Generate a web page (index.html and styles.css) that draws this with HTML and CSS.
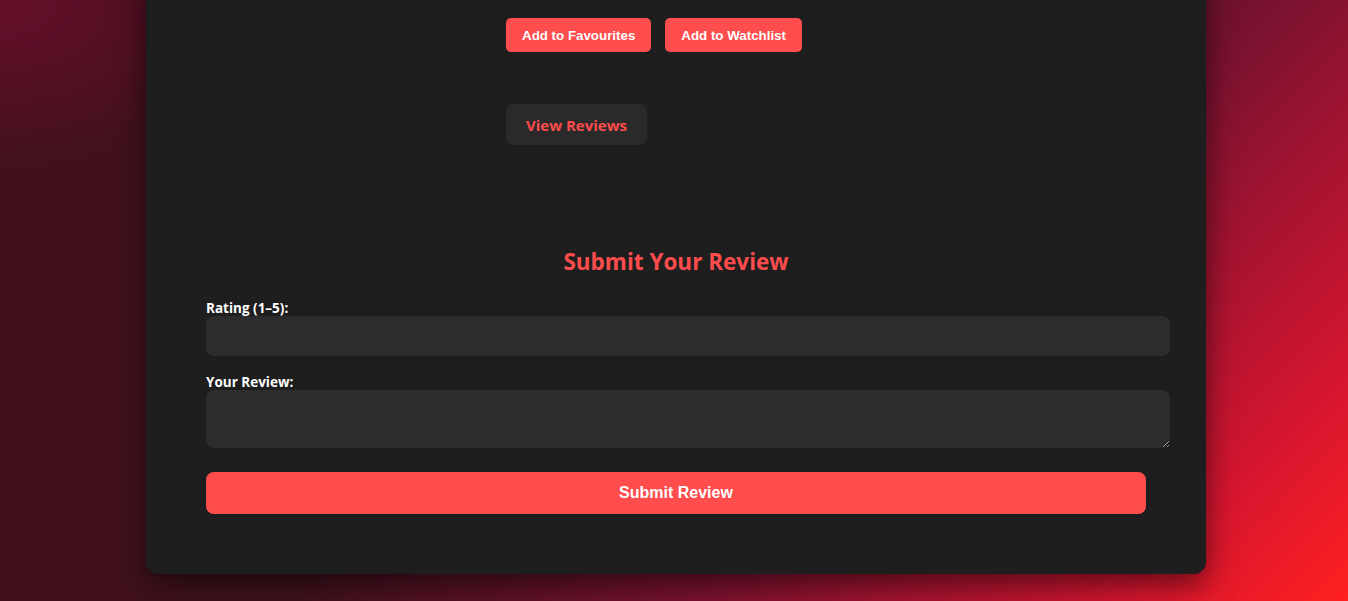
FILE: index.html
```html
<!DOCTYPE html>
<html lang="en">
<head>
<meta charset="utf-8">
<title>Movie Details</title>
<link rel="stylesheet" href="styles.css">
</head>
<body>
<div class="page">
  <main class="card">
    <section class="details">
      <div class="poster-space"></div>
      <div class="info">
        <div class="actions">
          <button class="btn-small">Add to Favourites</button>
          <button class="btn-small">Add to Watchlist</button>
        </div>
        <button class="btn-reviews">View Reviews</button>
      </div>
    </section>
    <section class="review-form">
      <h2 class="form-title">Submit Your Review</h2>
      <form class="form">
        <label class="label" for="rating">Rating (1–5):</label>
        <input class="field" id="rating" type="number" min="1" max="5">
        <label class="label label-gap" for="review">Your Review:</label>
        <textarea class="field area" id="review"></textarea>
        <button type="button" class="btn-submit">Submit Review</button>
      </form>
    </section>
  </main>
</div>
</body>
</html>
```

FILE: styles.css
```css
html, body {
  margin: 0;
  padding: 0;
}
body {
  height: 601px;
  overflow: hidden;
  background:
    radial-gradient(ellipse 260px 170px at 0 0, rgba(110, 14, 44, 0.85), rgba(110, 14, 44, 0) 100%),
    linear-gradient(135deg, #40111d 0%, #40111d 46%, #7a1230 66%, #d51530 88%, #ff2020 100%);
  font-family: "Open Sans", "Liberation Sans", sans-serif;
}
.page {
  display: flex;
  justify-content: center;
  padding-left: 4px;
}
.card {
  width: 1060px;
  box-sizing: border-box;
  margin-top: -40px;
  padding: 58px 60px 60px;
  background: #1e1e1e;
  border-radius: 12px;
  box-shadow: 0 10px 30px rgba(0, 0, 0, 0.55);
}
.details {
  display: flex;
}
.poster-space {
  width: 300px;
  flex: none;
}
.info {
  display: flex;
  flex-direction: column;
  align-items: flex-start;
}
.actions {
  display: flex;
  gap: 14px;
}
.btn-small {
  font-family: "Liberation Sans", Arial, sans-serif;
  font-weight: 700;
  font-size: 13.33px;
  line-height: 16px;
  height: 34px;
  color: #fff;
  background: #ff4c4c;
  border: none;
  border-radius: 5px;
  padding: 1px 16px 0;
  cursor: pointer;
}
.btn-reviews {
  margin-top: 52px;
  font-family: "Open Sans", sans-serif;
  font-weight: 700;
  font-size: 15px;
  line-height: 21px;
  height: 41px;
  color: #ff4c4c;
  background: #2a2a2a;
  border: none;
  border-radius: 8px;
  padding: 1px 20px 0;
  cursor: pointer;
}
.review-form {
  margin-top: 101px;
}
.form-title {
  margin: 0 0 22px;
  text-align: center;
  color: #ff4c4c;
  font-size: 22.5px;
  line-height: 32px;
  font-weight: 700;
}
.form {
  display: flex;
  flex-direction: column;
  align-items: flex-start;
}
.label {
  color: #fff;
  font-size: 13.5px;
  font-weight: 700;
  line-height: 16px;
}
.label-gap {
  margin-top: 18px;
}
.field {
  display: block;
  width: 100%;
  box-sizing: content-box;
  padding: 10px 12px;
  height: 20px;
  background: #2c2c2c;
  border: none;
  border-radius: 8px;
  color: #fff;
  outline: none;
}
.area {
  height: 38px;
  font-family: "Open Sans", sans-serif;
  resize: vertical;
}
.btn-submit {
  margin-top: 24px;
  width: 100%;
  height: 42px;
  background: #ff4c4c;
  border: none;
  border-radius: 8px;
  color: #fff;
  font-family: "Liberation Sans", Arial, sans-serif;
  font-weight: 700;
  font-size: 16px;
  cursor: pointer;
}
```
